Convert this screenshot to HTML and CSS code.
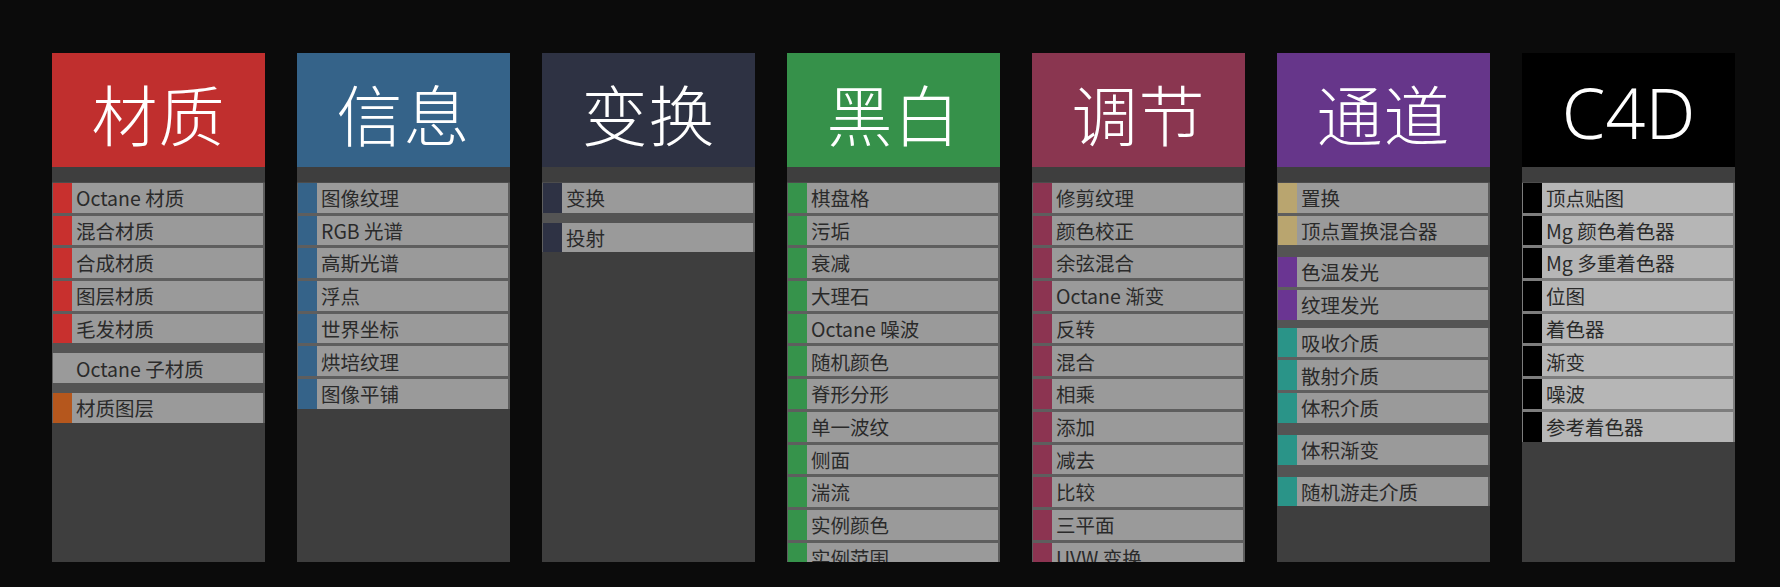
FILE: index.html
```html
<!DOCTYPE html>
<html lang="zh">
<head>
<meta charset="utf-8">
<link rel="stylesheet" href="styles.css">
</head>
<body>
<div class="board">
  <section class="panel">
    <header class="head red">材质</header>
    <div class="list">
      <div class="group">
        <div class="item"><span class="tag red"></span><span class="label">Octane 材质</span></div>
        <div class="item"><span class="tag red"></span><span class="label">混合材质</span></div>
        <div class="item"><span class="tag red"></span><span class="label">合成材质</span></div>
        <div class="item"><span class="tag red"></span><span class="label">图层材质</span></div>
        <div class="item"><span class="tag red"></span><span class="label">毛发材质</span></div>
      </div>
      <div class="group">
        <div class="item"><span class="tag none"></span><span class="label">Octane 子材质</span></div>
      </div>
      <div class="group">
        <div class="item"><span class="tag orange"></span><span class="label">材质图层</span></div>
      </div>
    </div>
  </section>

  <section class="panel">
    <header class="head blue">信息</header>
    <div class="list">
      <div class="group">
        <div class="item"><span class="tag blue"></span><span class="label">图像纹理</span></div>
        <div class="item"><span class="tag blue"></span><span class="label">RGB 光谱</span></div>
        <div class="item"><span class="tag blue"></span><span class="label">高斯光谱</span></div>
        <div class="item"><span class="tag blue"></span><span class="label">浮点</span></div>
        <div class="item"><span class="tag blue"></span><span class="label">世界坐标</span></div>
        <div class="item"><span class="tag blue"></span><span class="label">烘培纹理</span></div>
        <div class="item"><span class="tag blue"></span><span class="label">图像平铺</span></div>
      </div>
    </div>
  </section>

  <section class="panel">
    <header class="head navy">变换</header>
    <div class="list">
      <div class="group">
        <div class="item"><span class="tag navy"></span><span class="label">变换</span></div>
      </div>
      <div class="group">
        <div class="item"><span class="tag navy"></span><span class="label">投射</span></div>
      </div>
    </div>
  </section>

  <section class="panel">
    <header class="head green">黑白</header>
    <div class="list">
      <div class="group">
        <div class="item"><span class="tag green"></span><span class="label">棋盘格</span></div>
        <div class="item"><span class="tag green"></span><span class="label">污垢</span></div>
        <div class="item"><span class="tag green"></span><span class="label">衰减</span></div>
        <div class="item"><span class="tag green"></span><span class="label">大理石</span></div>
        <div class="item"><span class="tag green"></span><span class="label">Octane 噪波</span></div>
        <div class="item"><span class="tag green"></span><span class="label">随机颜色</span></div>
        <div class="item"><span class="tag green"></span><span class="label">脊形分形</span></div>
        <div class="item"><span class="tag green"></span><span class="label">单一波纹</span></div>
        <div class="item"><span class="tag green"></span><span class="label">侧面</span></div>
        <div class="item"><span class="tag green"></span><span class="label">湍流</span></div>
        <div class="item"><span class="tag green"></span><span class="label">实例颜色</span></div>
        <div class="item"><span class="tag green"></span><span class="label">实例范围</span></div>
      </div>
    </div>
  </section>

  <section class="panel">
    <header class="head wine">调节</header>
    <div class="list">
      <div class="group">
        <div class="item"><span class="tag wine"></span><span class="label">修剪纹理</span></div>
        <div class="item"><span class="tag wine"></span><span class="label">颜色校正</span></div>
        <div class="item"><span class="tag wine"></span><span class="label">余弦混合</span></div>
        <div class="item"><span class="tag wine"></span><span class="label">Octane 渐变</span></div>
        <div class="item"><span class="tag wine"></span><span class="label">反转</span></div>
        <div class="item"><span class="tag wine"></span><span class="label">混合</span></div>
        <div class="item"><span class="tag wine"></span><span class="label">相乘</span></div>
        <div class="item"><span class="tag wine"></span><span class="label">添加</span></div>
        <div class="item"><span class="tag wine"></span><span class="label">减去</span></div>
        <div class="item"><span class="tag wine"></span><span class="label">比较</span></div>
        <div class="item"><span class="tag wine"></span><span class="label">三平面</span></div>
        <div class="item"><span class="tag wine"></span><span class="label">UVW 变换</span></div>
      </div>
    </div>
  </section>

  <section class="panel">
    <header class="head purple">通道</header>
    <div class="list">
      <div class="group">
        <div class="item"><span class="tag tan"></span><span class="label">置换</span></div>
        <div class="item"><span class="tag tan"></span><span class="label">顶点置换混合器</span></div>
      </div>
      <div class="group wide">
        <div class="item"><span class="tag violet"></span><span class="label">色温发光</span></div>
        <div class="item"><span class="tag violet"></span><span class="label">纹理发光</span></div>
      </div>
      <div class="group tight">
        <div class="item"><span class="tag teal"></span><span class="label">吸收介质</span></div>
        <div class="item"><span class="tag teal"></span><span class="label">散射介质</span></div>
        <div class="item"><span class="tag teal"></span><span class="label">体积介质</span></div>
      </div>
      <div class="group wide">
        <div class="item"><span class="tag teal"></span><span class="label">体积渐变</span></div>
      </div>
      <div class="group wide">
        <div class="item"><span class="tag teal"></span><span class="label">随机游走介质</span></div>
      </div>
    </div>
  </section>

  <section class="panel c4d">
    <header class="head black latin">C4D</header>
    <div class="list">
      <div class="group">
        <div class="item"><span class="tag black"></span><span class="label">顶点贴图</span></div>
        <div class="item"><span class="tag black"></span><span class="label">Mg 颜色着色器</span></div>
        <div class="item"><span class="tag black"></span><span class="label">Mg 多重着色器</span></div>
        <div class="item"><span class="tag black"></span><span class="label">位图</span></div>
        <div class="item"><span class="tag black"></span><span class="label">着色器</span></div>
        <div class="item"><span class="tag black"></span><span class="label">渐变</span></div>
        <div class="item"><span class="tag black"></span><span class="label">噪波</span></div>
        <div class="item"><span class="tag black"></span><span class="label">参考着色器</span></div>
      </div>
    </div>
  </section>
</div>
</body>
</html>
```

FILE: styles.css
```css
html, body {
  margin: 0;
  padding: 0;
  background: #0b0b0b;
}

body {
  width: 1780px;
  height: 587px;
  overflow: hidden;
  font-family: "Noto Sans CJK SC", "Noto Sans", sans-serif;
}

.board {
  display: flex;
  gap: 32px;
  padding: 53px 0 0 52px;
}

.panel {
  width: 213px;
  height: 509px;
  background: #3e3e3e;
  overflow: hidden;
  display: flex;
  flex-direction: column;
}

.head {
  height: 114px;
  flex: none;
  display: flex;
  align-items: center;
  justify-content: center;
  color: #ffffff;
  font-size: 66px;
  font-weight: 300;
  letter-spacing: 1px;
  padding-top: 3px;
  box-sizing: border-box;
}

.head.latin {
  font-family: "Noto Sans", "Open Sans", sans-serif;
  font-weight: 300;
  font-size: 70px;
  letter-spacing: 0;
}

.head.red { background: #c02f2e; }
.head.blue { background: #356389; }
.head.navy { background: #2e3243; }
.head.green { background: #36914a; }
.head.wine { background: #8a3650; }
.head.purple { background: #66368a; }
.head.black { background: #000000; }

.list {
  margin-top: 15px;
  display: flex;
  flex-direction: column;
  background: #545454;
  border-top: 1px solid #4c4c4c;
}

.group {
  display: flex;
  flex-direction: column;
  gap: 3px;
  background: #5e5e5e;
}

.group + .group { margin-top: 10px; }
.group.wide { margin-top: 12px; }
.group.tight { margin-top: 8px; }

.c4d .group { background: #7d7d7d; }
.c4d .list { background: #6a6a6a; }

.item {
  height: 29.7px;
  display: flex;
  align-items: stretch;
  margin: 0 2px 0 1px;
  background: #9a9a9a;
}

.c4d .item { background: #b6b6b6; }

.tag {
  width: 19px;
  flex: none;
}

.tag.none { background: #9a9a9a; }
.tag.red { background: #c8302e; }
.tag.orange { background: #b5571d; }
.tag.blue { background: #356389; }
.tag.navy { background: #2e3244; }
.tag.green { background: #36934b; }
.tag.wine { background: #8c3451; }
.tag.tan { background: #b9a56f; }
.tag.violet { background: #6a3592; }
.tag.teal { background: #2a9488; }
.tag.black { background: #000000; }

.label {
  display: flex;
  align-items: center;
  padding-left: 4px;
  font-size: 19.5px;
  color: #2a2a2a;
  white-space: nowrap;
  line-height: 1;
}
```
